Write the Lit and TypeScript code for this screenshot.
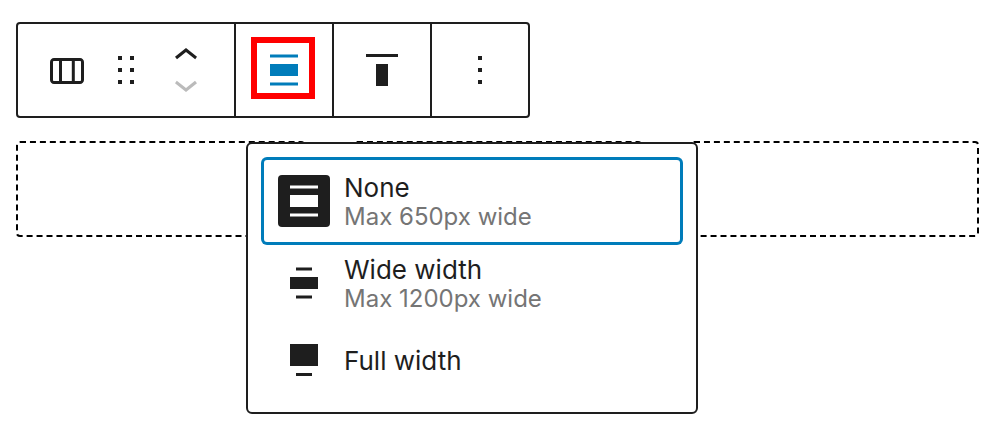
import { LitElement, html, css, nothing } from "lit";
import { customElement, property, state } from "lit/decorators.js";

const paths = {
  columns:
    "M19 6H6c-1.1 0-2 .9-2 2v9c0 1.1.9 2 2 2h13c1.1 0 2-.9 2-2V8c0-1.1-.9-2-2-2zm-4.1 1.5v10H10v-10h4.9zM5.5 17V8c0-.3.2-.5.5-.5h2.5v10H6c-.3 0-.5-.2-.5-.5zm14 0c0 .3-.2.5-.5.5h-2.6v-10H19c.3 0 .5.2.5.5v9z",
  drag: "M8 7h2V5H8v2zm0 6h2v-2H8v2zm0 6h2v-2H8v2zm6-14v2h2V5h-2zm0 8h2v-2h-2v2zm0 6h2v-2h-2v2z",
  up: "M6.5 12.4L12 8l5.5 4.4-.9 1.2L12 10l-4.5 3.6-1-1.2z",
  down: "M17.5 11.6L12 16l-5.5-4.4.9-1.2L12 14l4.5-3.6 1 1.2z",
  none: "M5 15h14V9H5v6zm0 4.8h14v-1.5H5v1.5zM5 4.2v1.5h14V4.2H5z",
  wide: "M5 9v6h14V9H5zm11-4.8H8v1.5h8V4.2zM8 19.8h8v-1.5H8v1.5z",
  full: "M5 4h14v11H5V4zm11 16H8v-1.5h8V20z",
  top: "M9 20h6V9H9v11zM4 4v1.5h16V4H4z",
  more: "M13 19h-2v-2h2v2zm0-6h-2v-2h2v2zm0-6h-2V5h2v2z",
};

type IconName = keyof typeof paths;

@customElement("block-icon")
class BlockIcon extends LitElement {
  @property() name: IconName = "none";
  @property() box = "0 0 24 24";

  static styles = css`
    :host {
      display: block;
    }
    .glyph {
      display: block;
      width: 48px;
      height: auto;
      fill: currentColor;
    }
  `;

  render() {
    return html`<svg class="glyph" viewBox=${this.box} aria-hidden="true">
      <path d=${paths[this.name]}></path>
    </svg>`;
  }
}

interface WidthOption {
  id: IconName;
  title: string;
  info?: string;
}

const options: WidthOption[] = [
  { id: "none", title: "None", info: "Max 650px wide" },
  { id: "wide", title: "Wide width", info: "Max 1200px wide" },
  { id: "full", title: "Full width" },
];

@customElement("app-root")
class AppRoot extends LitElement {
  @state() private selected: IconName = "none";

  static styles = css`
    :host {
      display: block;
      box-sizing: border-box;
      min-height: 100vh;
      padding: 22px 27px 26px 16px;
      background: #fff;
      color: #1e1e1e;
      font-family: Inter, "Liberation Sans", sans-serif;
    }
    button {
      margin: 0;
      padding: 0;
      border: 0;
      background: none;
      color: inherit;
      font: inherit;
      text-align: left;
      cursor: pointer;
    }
    .toolbar {
      display: flex;
      width: fit-content;
      border: 2px solid #1e1e1e;
      border-radius: 4px;
    }
    .group {
      position: relative;
      display: flex;
      align-items: center;
      gap: 12px;
      padding: 22px 24px;
    }
    .group + .group {
      border-left: 2px solid #1e1e1e;
    }
    .mover {
      display: flex;
      flex-direction: column;
    }
    .mover button:disabled {
      color: #bbb;
      cursor: default;
    }
    .active {
      color: #007cba;
    }
    .highlight {
      position: absolute;
      inset: 13px 17px 17px 15px;
      border: 6px solid #f00;
      pointer-events: none;
    }
    .popover {
      position: absolute;
      z-index: 1;
      top: 118px;
      left: 10px;
      display: flex;
      flex-direction: column;
      width: 416px;
      padding: 16px;
      border: 2px solid #1e1e1e;
      border-radius: 6px;
      background: #fff;
    }
    .option {
      display: flex;
      align-items: center;
      gap: 14px;
      min-height: 72px;
      padding: 10px 14px;
      border-radius: 3px;
    }
    .option.detailed {
      min-height: 82px;
    }
    .option.selected {
      box-shadow: 0 0 0 3px #007cba;
    }
    .badge {
      padding: 2px;
      border-radius: 4px;
    }
    .selected .badge {
      background: #1e1e1e;
      color: #fff;
    }
    .label {
      padding-top: 2px;
    }
    .title,
    .info {
      display: block;
      font-size: 26px;
      line-height: 30px;
    }
    .info {
      color: #757575;
      font-size: 24px;
      line-height: 28px;
    }
    .columns {
      display: grid;
      grid-template-columns: repeat(3, 1fr);
      gap: 48px;
      margin-top: 23px;
    }
    .column {
      min-height: 92px;
      border: 2px dashed #000;
      border-radius: 4px;
    }
  `;

  private renderOption(o: WidthOption) {
    const selected = o.id === this.selected;
    return html`<button
      class="option ${o.info ? "detailed" : ""} ${selected ? "selected" : ""}"
      role="menuitemradio"
      aria-checked=${selected ? "true" : "false"}
      @click=${() => (this.selected = o.id)}
    >
      <block-icon class="badge" name=${o.id}></block-icon>
      <span class="label">
        <span class="title">${o.title}</span>
        ${o.info ? html`<span class="info">${o.info}</span>` : nothing}
      </span>
    </button>`;
  }

  render() {
    return html`
      <div class="toolbar" role="toolbar" aria-label="Block tools">
        <div class="group">
          <button aria-label="Columns"><block-icon name="columns"></block-icon></button>
          <button aria-label="Drag"><block-icon name="drag"></block-icon></button>
          <div class="mover">
            <button aria-label="Move up"><block-icon name="up" box="0 7 24 12"></block-icon></button>
            <button aria-label="Move down" disabled>
              <block-icon name="down" box="0 5 24 12"></block-icon>
            </button>
          </div>
        </div>
        <div class="group">
          <button class="active" aria-label="Align" aria-haspopup="menu" aria-expanded="true">
            <block-icon name=${this.selected}></block-icon>
          </button>
          <div class="highlight"></div>
          <div class="popover" role="menu" aria-label="Align">
            ${options.map((o) => this.renderOption(o))}
          </div>
        </div>
        <div class="group">
          <button aria-label="Change vertical alignment"><block-icon name="top"></block-icon></button>
        </div>
        <div class="group">
          <button aria-label="Options"><block-icon name="more"></block-icon></button>
        </div>
      </div>
      <div class="columns">
        <div class="column"></div>
        <div class="column"></div>
        <div class="column"></div>
      </div>
    `;
  }
}
